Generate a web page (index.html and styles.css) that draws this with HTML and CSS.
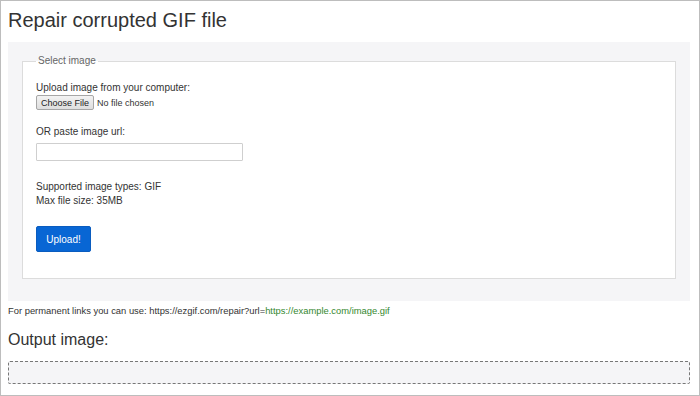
FILE: index.html
```html
<!DOCTYPE html>
<html>
<head>
<meta charset="utf-8">
<title>Repair corrupted GIF file</title>
<link rel="stylesheet" href="styles.css">
</head>
<body>
<div class="frame">
  <h1 class="title">Repair corrupted GIF file</h1>
  <div class="panel">
    <fieldset class="box">
      <legend class="legend">Select image</legend>
      <div class="label">Upload image from your computer:</div>
      <input class="file" type="file">
      <div class="label url-label">OR paste image url:</div>
      <input class="url" type="text">
      <div class="info">
        <div class="label">Supported image types: GIF</div>
        <div class="label">Max file size: 35MB</div>
      </div>
      <button class="upload" type="button">Upload!</button>
    </fieldset>
  </div>
  <p class="perm">For permanent links you can use: https://ezgif.com/repair?url=<a class="link" href="#">https://example.com/image.gif</a></p>
  <h2 class="out-title">Output image:</h2>
  <div class="output"></div>
</div>
</body>
</html>
```
FILE: styles.css
```css
html, body {
  margin: 0;
  padding: 0;
  background: #fff;
}
body {
  font-family: "Liberation Sans", Arial, sans-serif;
  color: #333;
}
.frame {
  box-sizing: border-box;
  width: 700px;
  height: 396px;
  border: 1px solid #bdbdbd;
  padding: 0 9px 0 7px;
  overflow: hidden;
}
.title {
  margin: 0;
  padding-top: 7px;
  font-size: 20px;
  line-height: 24px;
  font-weight: normal;
  color: #333;
  margin-bottom: 10px;
}
.panel {
  background: #f5f5f7;
  padding: 13px 14px 22px 14px;
}
.box {
  margin: 0;
  background: #fff;
  border: 1px solid #dcdcdc;
  padding: 14px 13px 26px 13px;
  min-width: 0;
}
.legend {
  font-size: 10px;
  line-height: 12px;
  color: #666;
  padding: 0 2px;
}
.label {
  font-size: 10px;
  line-height: 14px;
  color: #333;
}
.file {
  display: block;
  height: 15px;
  font-family: "Liberation Sans", Arial, sans-serif;
  font-size: 9px;
  color: #333;
  padding: 0;
  margin: 0;
}
.file::file-selector-button {
  font-family: "Liberation Sans", Arial, sans-serif;
  font-size: 9px;
  height: 15px;
  padding: 0 4px;
  margin-right: 3px;
  background: linear-gradient(#f3f3f3, #dedede);
  border: 1px solid #a6a6a6;
  border-radius: 2px;
  color: #222;
}
.url-label {
  margin-top: 15px;
}
.url {
  display: block;
  box-sizing: border-box;
  width: 207px;
  height: 18px;
  margin-top: 4px;
  border: 1px solid #cfcfcf;
  border-radius: 1px;
  padding: 0 4px;
  font-size: 10px;
}
.info {
  margin-top: 19px;
}
.upload {
  display: block;
  margin-top: 18px;
  height: 26px;
  width: 55px;
  padding: 0;
  background: #0866d4;
  border: 1px solid #0a5cbf;
  border-radius: 2px;
  color: #fff;
  font-family: "Liberation Sans", Arial, sans-serif;
  font-size: 10px;
}
.perm {
  margin: 4px 0 0 0;
  font-size: 9.4px;
  line-height: 12px;
  color: #333;
}
.link {
  color: #35882f;
  text-decoration: none;
}
.out-title {
  margin: 13px 0 0 0;
  font-size: 16px;
  line-height: 20px;
  font-weight: normal;
  color: #333;
}
.output {
  box-sizing: border-box;
  margin-top: 11px;
  height: 23px;
  border: 1px dashed #777;
  border-radius: 2px;
  background: #f5f5f7;
}
```
